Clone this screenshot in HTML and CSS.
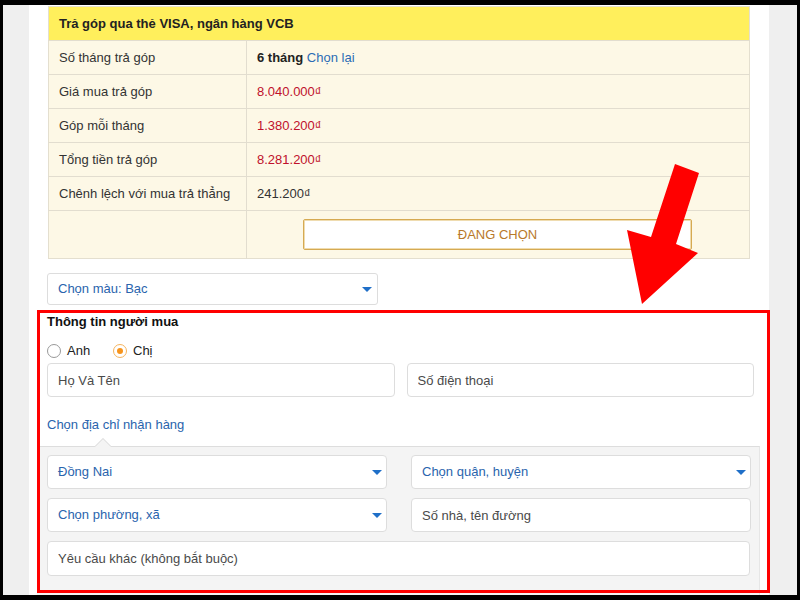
FILE: index.html
```html
<!DOCTYPE html>
<html lang="vi">
<head>
<meta charset="UTF-8" />
<meta name="viewport" content="width=device-width, initial-scale=1" />
<title>Trả góp</title>
<link rel="stylesheet" href="styles.css">
</head>
<body>
<div class="frame">
  <div class="page">
    <table class="installment">
      <tr><th colspan="2">Trả góp qua thẻ VISA, ngân hàng VCB</th></tr>
      <tr><td class="label">Số tháng trả góp</td><td><b>6 tháng</b> <a class="link">Chọn lại</a></td></tr>
      <tr><td class="label">Giá mua trả góp</td><td class="money">8.040.000₫</td></tr>
      <tr><td class="label">Góp mỗi tháng</td><td class="money">1.380.200₫</td></tr>
      <tr><td class="label">Tổng tiền trả góp</td><td class="money">8.281.200₫</td></tr>
      <tr><td class="label">Chênh lệch với mua trả thẳng</td><td>241.200₫</td></tr>
      <tr class="last"><td class="label"></td><td><button class="btn-choose">ĐANG CHỌN</button></td></tr>
    </table>

    <div class="dropdown color-select">Chọn màu: Bạc<span class="caret"></span></div>

    <!-- thông tin người mua -->
    <section class="buyer">
      <h4>Thông tin người mua</h4>
      <div class="gender">
        <label><span class="radio"></span>Anh</label>
        <label><span class="radio checked"></span>Chị</label>
      </div>
      <div class="row-2">
        <input type="text" placeholder="Họ Và Tên">
        <input type="text" placeholder="Số điện thoại">
      </div>

      <div class="addr-title">Chọn địa chỉ nhận hàng</div>
      <div class="addr-panel">
        <div class="addr-grid">
          <div class="dropdown">Đồng Nai<span class="caret"></span></div>
          <div class="dropdown">Chọn quận, huyện<span class="caret"></span></div>
          <div class="dropdown">Chọn phường, xã<span class="caret"></span></div>
          <input type="text" placeholder="Số nhà, tên đường">
        </div>
        <input type="text" class="note" placeholder="Yêu cầu khác (không bắt buộc)">
      </div>
    </section>
  </div>
</div>

<!-- đánh dấu -->
<div class="highlight"></div>
<svg class="arrow" width="800" height="600" viewBox="0 0 800 600">
  <polygon points="675,164 699,173 676,244 698,253 642,304 627,230 651,237" fill="#ff0000"/>
</svg>
</body>
</html>
```

FILE: styles.css
```css
body {
  margin: 0;
  width: 800px;
  height: 600px;
  overflow: hidden;
  background: #000;
  position: relative;
  font-family: "Liberation Sans", Arial, sans-serif;
  font-size: 13px;
  color: #333;
}
.frame {
  margin: 5px 3px;
  height: 590px;
  background: #efefef;
  overflow: hidden;
}
.page {
  margin-left: 26px;
  width: 740px;
  height: 100%;
  background: #fff;
  padding: 1px 15px 0 18px;
  box-sizing: border-box;
}

/* bảng trả góp */
.installment {
  width: 702px;
  margin: 0 4px 0 1px;
  border-collapse: collapse;
  background: #fdf8e6;
  border: 1px solid #e4dfcf;
}
.installment th {
  background: #ffef5c;
  text-align: left;
  font-weight: bold;
  color: #222;
  height: 33px;
  padding: 0 10px;
}
.installment td {
  height: 33px;
  padding: 0 10px;
  border-top: 1px solid #e2ddcf;
}
.installment td.label {
  width: 177px;
  border-right: 1px solid #e2ddcf;
}
.installment b {
  color: #222;
}
.installment .link {
  color: #2b6cb5;
}
.installment .money {
  color: #c0102c;
}
.installment tr.last td {
  height: 47px;
  text-align: center;
}
.btn-choose {
  width: 389px;
  height: 31px;
  margin-left: -1px;
  background: #fff;
  border: 1px solid #d6aa52;
  box-shadow: inset 0 0 0 1px #efdcb0;
  border-radius: 2px;
  color: #b8792a;
  font-family: inherit;
  font-size: 13px;
}

/* dropdown */
.dropdown {
  position: relative;
  height: 32px;
  line-height: 30px;
  padding: 0 10px;
  border: 1px solid #ddd;
  border-radius: 3px;
  background: #fff;
  color: #2a64ad;
  box-sizing: border-box;
}
.dropdown .caret {
  position: absolute;
  right: 5px;
  top: 50%;
  margin-top: -2px;
  border-left: 5px solid transparent;
  border-right: 5px solid transparent;
  border-top: 5px solid #1f6fc8;
}
.color-select {
  width: 331px;
  margin-top: 14px;
}

/* người mua */
.buyer h4 {
  margin: 9px 0 0;
  font-size: 13px;
  line-height: 16px;
  color: #111;
}
.gender {
  display: flex;
  gap: 14px;
  margin-top: 13px;
  line-height: 16px;
  color: #222;
}
.gender label {
  display: flex;
  align-items: center;
  gap: 6px;
  width: 52px;
}
.radio {
  width: 12px;
  height: 12px;
  border: 1px solid #999;
  border-radius: 50%;
  position: relative;
}
.radio.checked {
  border-color: #f5b45e;
}
.radio.checked::after {
  content: "";
  position: absolute;
  left: 3px;
  top: 3px;
  width: 6px;
  height: 6px;
  border-radius: 50%;
  background: #f7941d;
}
input[type="text"] {
  height: 34px;
  border: 1px solid #ddd;
  border-radius: 4px;
  padding: 0 10px;
  box-sizing: border-box;
  font-family: inherit;
  font-size: 13px;
  color: #444;
  background: #fff;
  outline: none;
}
input::placeholder {
  color: #4a4a4a;
}
.row-2 {
  display: grid;
  grid-template-columns: 1fr 1fr;
  gap: 12px;
  margin-top: 4px;
}
.addr-title {
  margin-top: 20px;
  line-height: 16px;
  color: #2a64ad;
}
.addr-panel {
  position: relative;
  margin: 13px -6px 0 -10px;
  padding: 8px 9px 20px 10px;
  background: #f4f4f4;
  border-top: 1px solid #ddd;
  border-right: 1px solid #e6e6e6;
}
.addr-panel::before,
.addr-panel::after {
  content: "";
  position: absolute;
  left: 58px;
  border-left: 8px solid transparent;
  border-right: 8px solid transparent;
}
.addr-panel::before {
  top: -9px;
  border-bottom: 8px solid #d6d6d6;
}
.addr-panel::after {
  top: -8px;
  border-bottom: 8px solid #f4f4f4;
}
.addr-grid {
  display: grid;
  grid-template-columns: 340px 340px;
  justify-content: space-between;
  gap: 9px 24px;
}
.addr-grid .dropdown {
  height: 34px;
  line-height: 32px;
  border-radius: 4px;
}
.addr-grid .dropdown .caret {
  right: 4px;
}
.note {
  width: 100%;
  height: 35px !important;
  margin-top: 9px;
}

/* đánh dấu màu đỏ */
.highlight {
  position: absolute;
  left: 37px;
  top: 310px;
  width: 733px;
  height: 283px;
  border: 3px solid #ff0000;
  box-sizing: border-box;
}
.arrow {
  position: absolute;
  left: 0;
  top: 0;
}
```
